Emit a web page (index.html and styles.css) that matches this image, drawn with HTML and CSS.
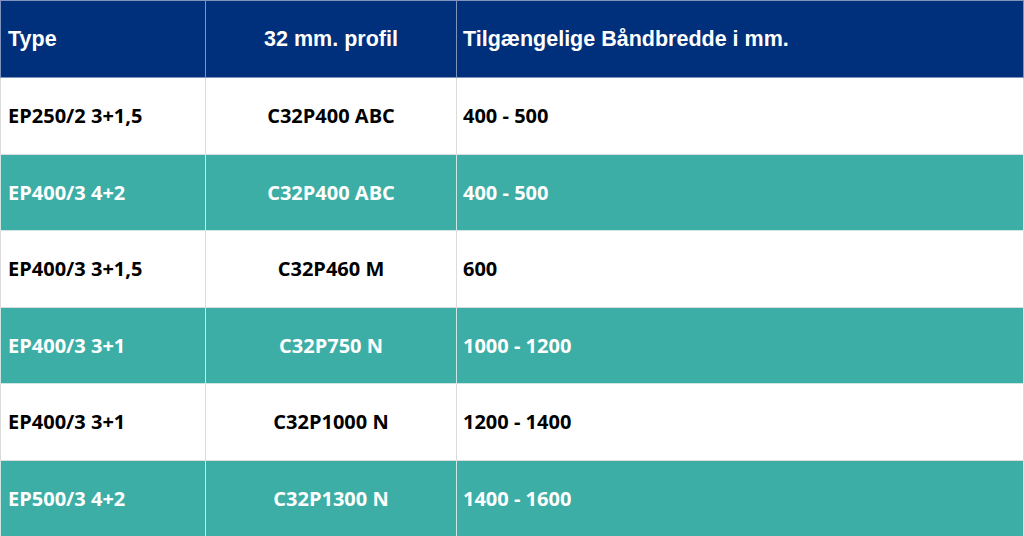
FILE: index.html
```html
<!DOCTYPE html>
<html lang="da">
<head>
<meta charset="utf-8">
<title>Tabel</title>
<link rel="stylesheet" href="styles.css">
</head>
<body>
<table class="spec">
  <thead>
    <tr>
      <th class="c1">Type</th>
      <th class="c2">32 mm. profil</th>
      <th class="c3">Tilgængelige Båndbredde i mm.</th>
    </tr>
  </thead>
  <tbody>
    <tr class="light"><td class="c1">EP250/2 3+1,5</td><td class="c2">C32P400 ABC</td><td class="c3">400 - 500</td></tr>
    <tr class="teal"><td class="c1">EP400/3 4+2</td><td class="c2">C32P400 ABC</td><td class="c3">400 - 500</td></tr>
    <tr class="light"><td class="c1">EP400/3 3+1,5</td><td class="c2">C32P460 M</td><td class="c3">600</td></tr>
    <tr class="teal"><td class="c1">EP400/3 3+1</td><td class="c2">C32P750 N</td><td class="c3">1000 - 1200</td></tr>
    <tr class="light"><td class="c1">EP400/3 3+1</td><td class="c2">C32P1000 N</td><td class="c3">1200 - 1400</td></tr>
    <tr class="teal"><td class="c1">EP500/3 4+2</td><td class="c2">C32P1300 N</td><td class="c3">1400 - 1600</td></tr>
  </tbody>
</table>
</body>
</html>
```
FILE: styles.css
```css
html, body {
  margin: 0;
  padding: 0;
  background: #ffffff;
}
.spec {
  width: 1024px;
  height: 536px;
  border-collapse: collapse;
  table-layout: fixed;
}
.spec th, .spec td {
  padding: 0 7px;
  vertical-align: middle;
  box-sizing: border-box;
}
.spec th {
  height: 77px;
  background: #00307b;
  color: #ffffff;
  font-family: "Liberation Sans", Arial, sans-serif;
  font-weight: 700;
  font-size: 21.5px;
  border: 1px solid #7f93bd;
}
.spec td {
  height: 76.5px;
  font-family: "Open Sans", sans-serif;
  font-weight: 700;
  font-size: 20px;
  border: 1px solid #dcdcdc;
}
.c1 { width: 205px; text-align: left; }
.c2 { width: 251px; text-align: center; }
.spec .c3 { text-align: left; padding-left: 6px; }
.light td {
  background: #ffffff;
  color: #000000;
}
.teal td {
  background: #3daea5;
  color: #ffffff;
  border-color: #cfe6e3;
}
```
